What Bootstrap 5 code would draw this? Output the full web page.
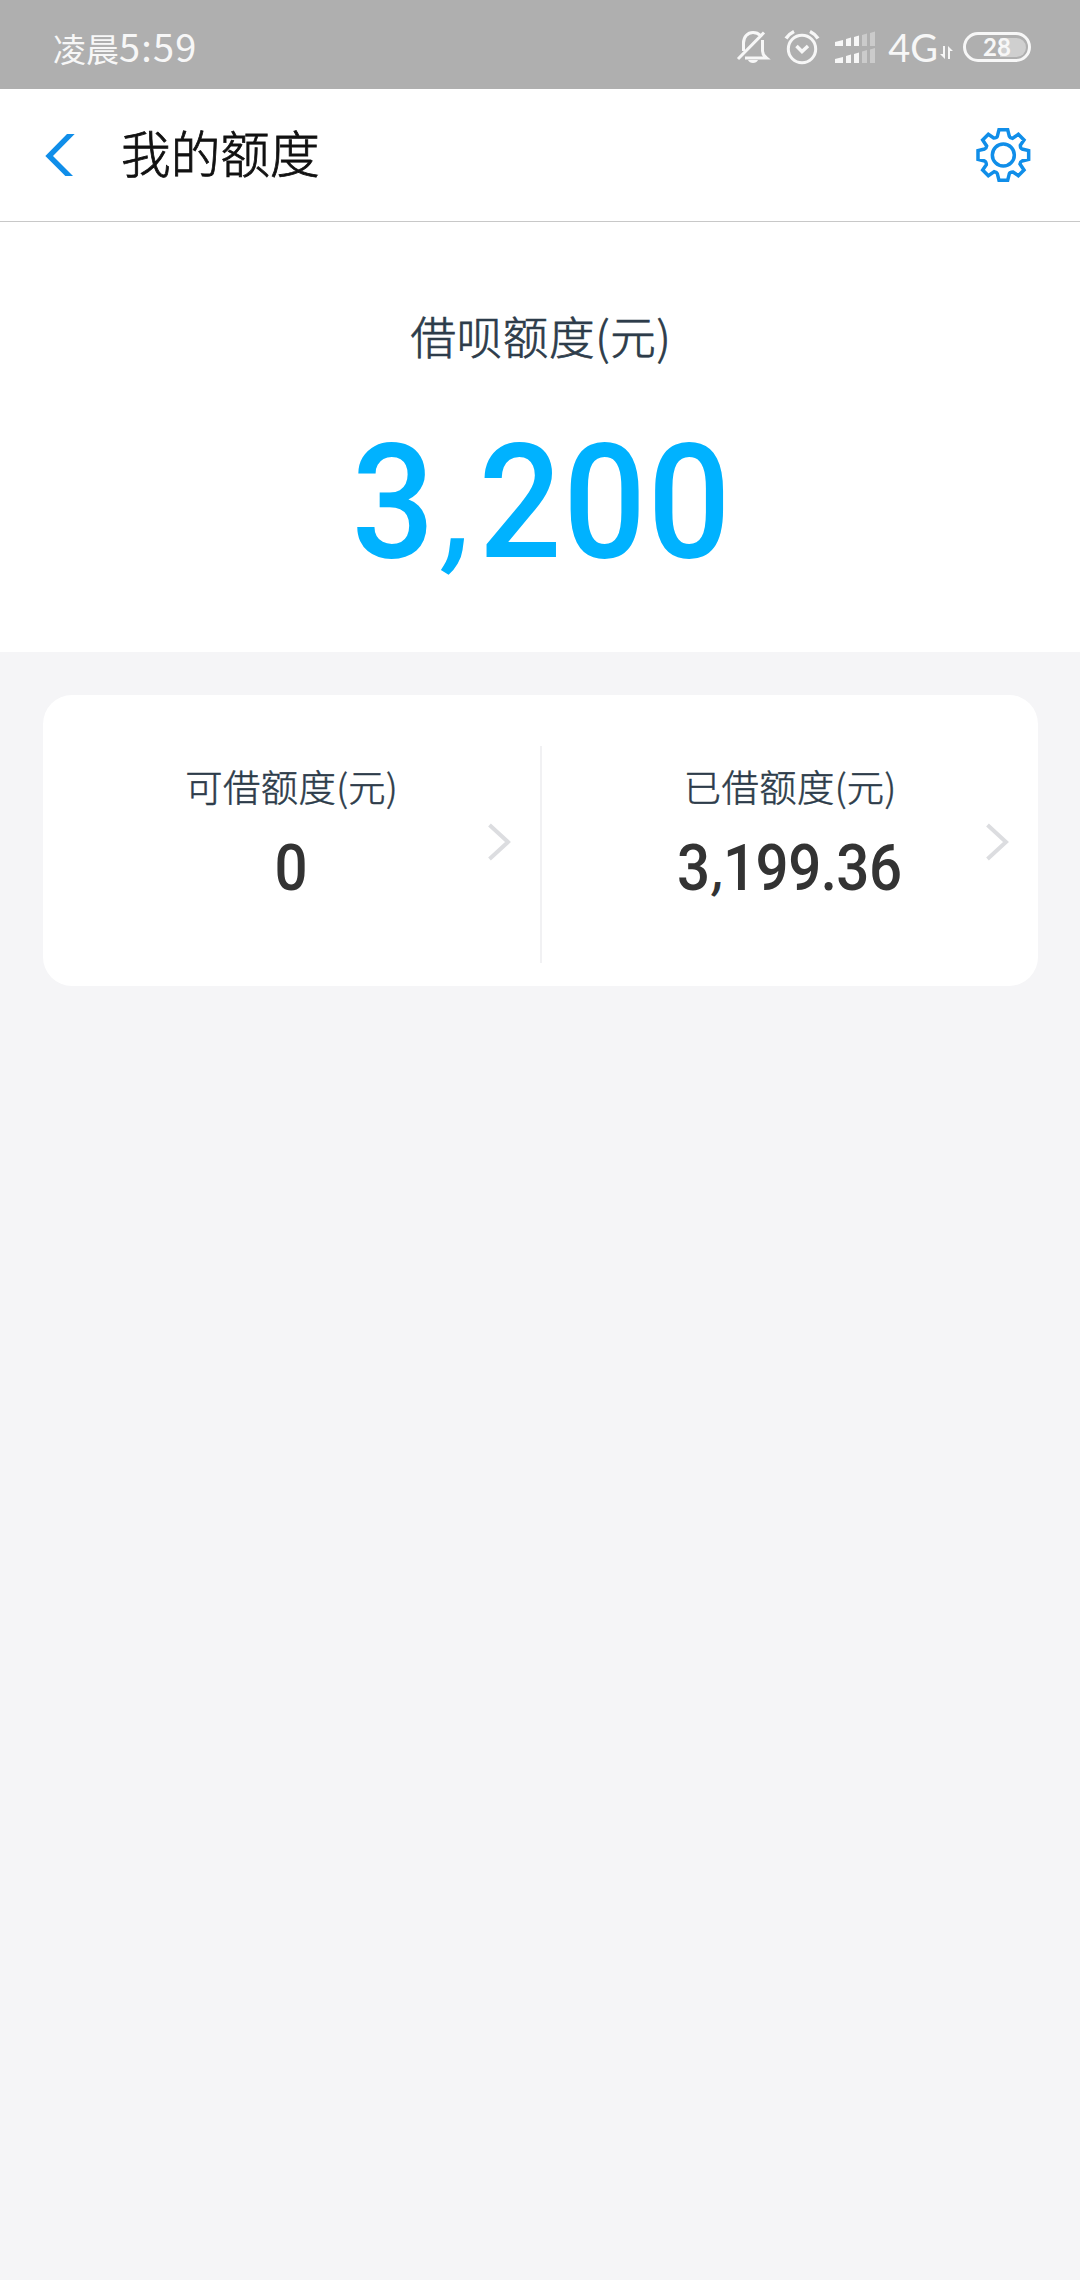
<!DOCTYPE html>
<html lang="zh-CN">
<head>
<meta charset="utf-8">
<meta name="viewport" content="width=device-width, initial-scale=1">
<title>我的额度</title>
<link rel="stylesheet" href="https://cdn.jsdelivr.net/npm/bootstrap@5.3.0/dist/css/bootstrap.min.css">
<style>
body{background:#f5f5f7;font-family:"Noto Sans CJK SC",sans-serif;min-height:2280px;overflow-x:hidden}
svg{display:block;flex:none}
.statusbar{height:89px;background:#afafaf;color:#f7f7f7;padding:0 49px 0 53px}
.clock{padding-top:16px}
.clock-cjk{font-size:33px;line-height:60px}
.clock-num{font-size:38px;line-height:60px;letter-spacing:1.2px}
.status-icons{height:94px}
.net-label{font:400 38px/40px Lato,sans-serif;margin-left:13px}
.net-arrows{margin:11px 1px 0 2px}
.battery{width:68px;height:30px;border:3px solid #f7f7f7;border-radius:15px;padding:2px;margin-left:9px}
.battery-level{width:26px;height:19px;border-radius:0 10px 10px 0;background:#cfcfcf}
.battery-text{font:700 24px/24px Lato,sans-serif;left:17px;top:0}
.titlebar{height:133px;border-bottom:1px solid #c8c8c8;padding:0 49px 0 45px}
.page-title{font-size:49.7px;line-height:60px;font-weight:300;color:#111;margin:-9px 0 0 46px;-webkit-text-stroke:.8px #111}
.hero{height:430px;padding-top:81px}
.hero-label{font-size:45.5px;line-height:64px;font-weight:300;color:#2d3c4a;letter-spacing:.7px;padding-left:2px;-webkit-text-stroke:.7px #2d3c4a}
.hero-amount{font:500 160px/160px Roboto,sans-serif;color:#00b2ff;margin-top:56px;padding-left:5px}
.digits{display:inline-block;transform:scaleX(.91);letter-spacing:2px}
.hero-amount .comma{display:inline-block;font-size:124px;font-weight:700;line-height:1;transform:translateY(-4px) skewX(-8deg);margin:0 3px 0 11px}
.quota-card{margin:43px 42px 0 43px;height:291px;border-radius:29px}
.quota-cell{padding-left:52px;padding-right:29px}
.quota-label{font-size:37.3px;line-height:50px;font-weight:300;color:#2d3c4a;margin-top:66px;letter-spacing:.4px;padding-left:1px;-webkit-text-stroke:.5px #2d3c4a}
.quota-amount{font:500 64px/64px Roboto,sans-serif;color:#333;margin-top:26px}
.quota-amount .digits{letter-spacing:-.6px}
.quota-amount .comma{display:inline-block;font-size:50px;font-weight:700;line-height:1;transform:translateY(-2px) skewX(-8deg);margin:0 -1px 0 4px}
.divider{width:2px;height:217px;margin-top:51px;background:#f1f1f3}
.chev{margin-top:128px}
</style>
</head>
<body>
<header class="statusbar d-flex justify-content-between">
  <div class="clock d-flex align-items-baseline"><span class="clock-cjk">凌晨</span><span class="clock-num">5:59</span></div>
  <div class="status-icons d-flex align-items-center">
    <svg width="139" height="36" viewBox="736 29 139 36" fill="none" stroke="#f7f7f7" stroke-width="3">
      <path d="M743.5 51V43c0-6 4-10.5 9.500-10.500 3 0 5.500 1 7.300 3M762.500 40v11c0 3 1.500 5 4 7H745M738 59L764 32.500" stroke-linecap="butt"/>
      <path d="M748 60h10c-1.500 4-8.500 4-10 0z" fill="#f7f7f7" stroke="none"/>
      <circle cx="802" cy="49" r="13.700"/>
      <path d="M796.500 46l5.500 5.500 6-5.500M786 38.500c2-3.200 4.500-5.300 8-7M818 38.500c-2-3.200-4.500-5.300-8-7" stroke-width="3.500"/>
      <g fill="#f7f7f7" stroke="none">
        <path d="M835 42l8-2v6h-8zM846 39l5-1.500V46h-5zM854 37l5-1.500V46h-5zM835 59l8-2v6h-8zM846 56l5-1.500V63h-5zM854 54l5-1.500V63h-5z"/>
        <path fill="#cbcbcb" d="M862 35l5-1.500V46h-5zM870 33l5-1.500V46h-5zM862 51.500l5-1.500V63h-5zM870 49.500l5-1.500V63h-5z"/>
      </g>
    </svg>
    <span class="net-label">4G</span>
    <svg class="net-arrows" width="13" height="13" viewBox="0 0 13 13" fill="#f7f7f7"><path d="M3 0h2v13L0 8h3zM8 13V0l5 5h-3v8z"/></svg>
    <div class="battery position-relative d-flex justify-content-end align-items-center"><div class="battery-level"></div><span class="battery-text position-absolute">28</span></div>
  </div>
</header>
<nav class="titlebar bg-white d-flex align-items-center">
  <svg width="30" height="42" viewBox="137 399 88 126"><path fill="#108ee9" d="M202 399h23l-65 66 60 60h-23l-60-60z"/></svg>
  <h1 class="page-title">我的额度</h1>
  <svg class="ms-auto" width="56" height="56" viewBox="-85 -84 168 168" fill="none" stroke="#108ee9" stroke-width="10.500">
    <circle r="33"/>
    <path d="M-13-76H13L18-56Q20-51 27-50L45-62 62-45 51-29Q51-20 56-18L76-13V13L56 18Q51 20 50 27L62 45 45 62 29 51Q20 51 18 56L13 76H-13L-18 56Q-20 51-27 50L-45 62-62 45-51 29Q-51 20-56 18L-76 13V-13L-56-18Q-51-20-50-27L-62-45-45-62-29-51Q-20-51-18-56Z"/>
  </svg>
</nav>
<main>
  <section class="hero bg-white text-center">
    <div class="hero-label">借呗额度(元)</div>
    <div class="hero-amount"><span class="digits">3<span class="comma">,</span>200</span></div>
  </section>
  <section class="quota-card bg-white d-flex">
    <div class="quota-cell d-flex flex-fill w-50">
      <div class="flex-fill text-center"><div class="quota-label">可借额度(元)</div><div class="quota-amount"><span class="digits">0</span></div></div>
      <svg class="chev" width="23" height="38" viewBox="0 0 23 38" fill="none" stroke="#dcdde0" stroke-width="4"><path d="M1.500 2L20 19 1.500 36"/></svg>
    </div>
    <div class="divider"></div>
    <div class="quota-cell d-flex flex-fill w-50">
      <div class="flex-fill text-center"><div class="quota-label">已借额度(元)</div><div class="quota-amount"><span class="digits">3<span class="comma">,</span>199.36</span></div></div>
      <svg class="chev" width="23" height="38" viewBox="0 0 23 38" fill="none" stroke="#dcdde0" stroke-width="4"><path d="M1.500 2L20 19 1.500 36"/></svg>
    </div>
  </section>
</main>
<script src="https://cdn.jsdelivr.net/npm/bootstrap@5.3.0/dist/js/bootstrap.bundle.min.js"></script>
</body>
</html>
